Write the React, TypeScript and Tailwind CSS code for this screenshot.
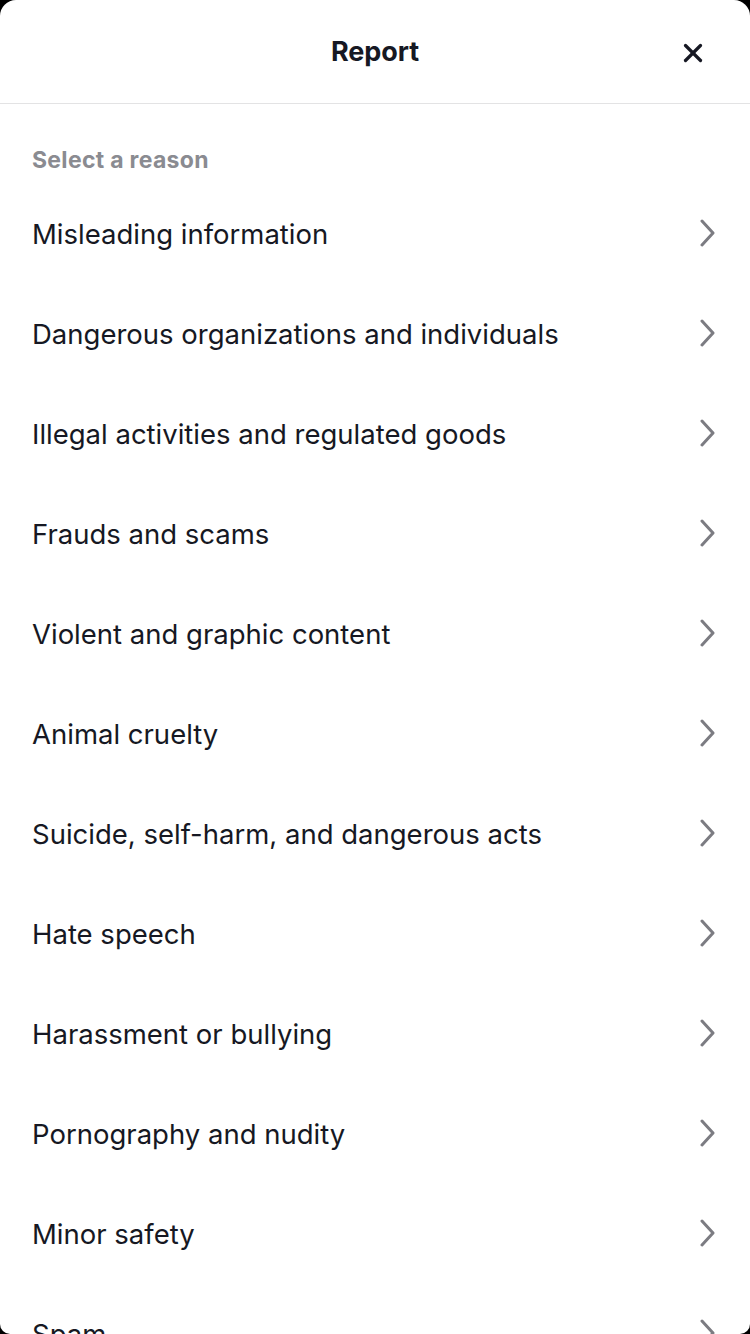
import { X } from "lucide-react";

const reasons = [
  "Misleading information",
  "Dangerous organizations and individuals",
  "Illegal activities and regulated goods",
  "Frauds and scams",
  "Violent and graphic content",
  "Animal cruelty",
  "Suicide, self-harm, and dangerous acts",
  "Hate speech",
  "Harassment or bullying",
  "Pornography and nudity",
  "Minor safety",
  "Spam",
];

function Chevron() {
  return (
    <svg width="15" height="28" viewBox="0 0 15 28" fill="none" className="shrink-0">
      <polyline
        points="2,2 13,14 2,26"
        stroke="#7c7c82"
        strokeWidth="3"
        strokeLinecap="round"
        strokeLinejoin="round"
      />
    </svg>
  );
}

function App() {
  return (
    <div className="w-[750px] h-[1334px] bg-black overflow-hidden font-['Inter',sans-serif]">
      <div className="h-full bg-white rounded-t-[16px] rounded-b-[10px] overflow-hidden">
        <header className="relative h-[104px] flex items-center justify-center border-b border-[#e3e3e4]">
          <h1 className="text-[27px] font-bold text-[#161823] tracking-[-0.1px] mt-[1px]">Report</h1>
          <button className="absolute right-[42px] top-[38px] text-[#161823]">
            <X size={30} strokeWidth={2.6} />
          </button>
        </header>

        <section className="pt-[43px]">
          <p className="px-8 h-[26px] leading-[26px] text-[23px] tracking-[0.3px] font-bold text-[#8a8b91]">
            Select a reason
          </p>
          <ul className="mt-[10px]">
            {reasons.map((r) => (
              <li
                key={r}
                className="h-[100px] flex items-center justify-between pl-8 pr-[35px] text-[27.5px] text-[#161823]"
              >
                <span className="pt-[3px]">{r}</span>
                <Chevron />
              </li>
            ))}
          </ul>
        </section>
      </div>
    </div>
  );
}

export default App;
